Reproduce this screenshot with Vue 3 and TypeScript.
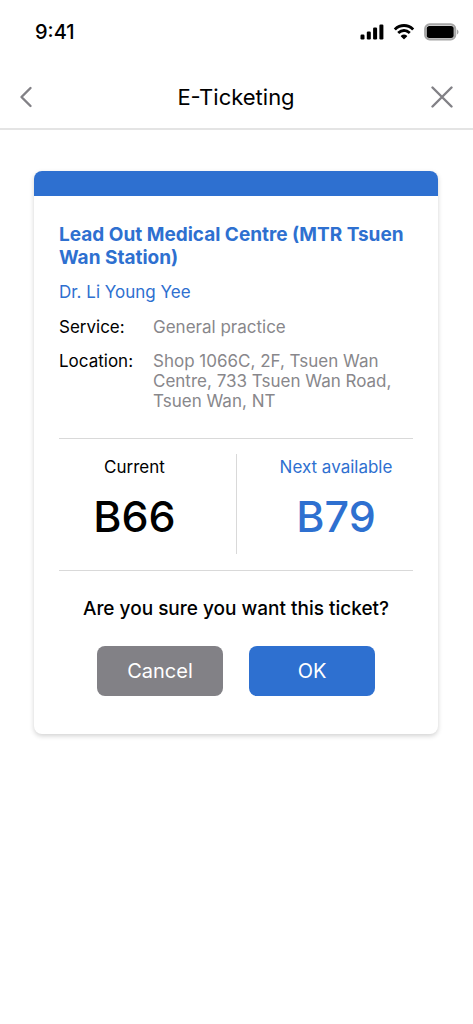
<script setup lang="ts">
interface Detail {
  label: string
  value: string
}

interface Ticket {
  caption: string
  number: string
  highlighted: boolean
}

const clinic = 'Lead Out Medical Centre (MTR Tsuen Wan Station)'
const doctor = 'Dr. Li Young Yee'

const details: Detail[] = [
  { label: 'Service:', value: 'General practice' },
  { label: 'Location:', value: 'Shop 1066C, 2F, Tsuen Wan Centre, 733 Tsuen Wan Road, Tsuen Wan, NT' },
]

const tickets: Ticket[] = [
  { caption: 'Current', number: 'B66', highlighted: false },
  { caption: 'Next available', number: 'B79', highlighted: true },
]
</script>

<template>
  <div class="screen">
    <div class="status">
      <span class="time">9:41</span>
      <div class="indicators">
        <svg width="24" height="18" viewBox="0 0 24 18" aria-hidden="true">
          <rect x="0.5" y="11.5" width="4" height="5" rx="1.2" />
          <rect x="6.8" y="8.5" width="4" height="8" rx="1.2" />
          <rect x="13.1" y="4.5" width="4" height="12" rx="1.2" />
          <rect x="19.4" y="1.5" width="4" height="15" rx="1.2" />
        </svg>
        <svg width="22" height="18" viewBox="0 0 22 18" aria-hidden="true">
          <path d="M11 4.1c3 0 5.8 1.15 7.9 3.15.16.15.4.15.56 0l1.5-1.52a.42.42 0 0 0 0-.6C15.4-.27 6.6-.27 1.04 5.13a.42.42 0 0 0 0 .6l1.5 1.52c.16.15.4.15.56 0C5.2 5.25 8 4.1 11 4.1Z" />
          <path d="M11 9.1c1.64 0 3.22.6 4.43 1.7.16.15.42.15.58 0l1.5-1.53a.42.42 0 0 0 0-.6 9.5 9.5 0 0 0-13.02 0 .42.42 0 0 0 0 .6l1.5 1.53c.16.15.42.15.58 0A6.58 6.58 0 0 1 11 9.1Z" />
          <path d="M14.05 12.8a.42.42 0 0 1-.01.6l-2.6 2.65a.6.6 0 0 1-.88 0l-2.6-2.65a.42.42 0 0 1-.01-.6 4.68 4.68 0 0 1 6.1 0Z" />
        </svg>
        <svg width="35" height="18" viewBox="0 0 35 18" aria-hidden="true">
          <rect x="1.2" y="1.4" width="30" height="15" rx="4.5" fill="none" stroke="#a6a6a6" stroke-width="2.2" />
          <rect x="2.7" y="2.9" width="27" height="12" rx="2.6" />
          <path d="M33 6.4v5c.9-.45 1.5-1.4 1.5-2.5s-.6-2.05-1.5-2.5Z" fill="#a6a6a6" />
        </svg>
      </div>
    </div>

    <header class="bar">
      <button class="icon" type="button" aria-label="Back">
        <svg width="14" height="22" viewBox="0 0 14 22">
          <path d="M11.5 2 2.5 11l9 9" />
        </svg>
      </button>
      <h1>E-Ticketing</h1>
      <button class="icon end" type="button" aria-label="Close">
        <svg width="22" height="22" viewBox="0 0 22 22">
          <path d="M1.5 1.5l19 19M20.5 1.5l-19 19" />
        </svg>
      </button>
    </header>

    <main>
      <section class="card">
        <div class="content">
          <h2>{{ clinic }}</h2>
          <p class="doctor">{{ doctor }}</p>
          <dl>
            <div v-for="item in details" :key="item.label" class="detail">
              <dt>{{ item.label }}</dt>
              <dd>{{ item.value }}</dd>
            </div>
          </dl>
          <div class="tickets">
            <div
              v-for="ticket in tickets"
              :key="ticket.number"
              class="ticket"
              :class="{ next: ticket.highlighted }"
            >
              <span class="caption">{{ ticket.caption }}</span>
              <span class="number">{{ ticket.number }}</span>
            </div>
          </div>
          <p class="question">Are you sure you want this ticket?</p>
          <div class="actions">
            <button class="cancel" type="button">Cancel</button>
            <button class="ok" type="button">OK</button>
          </div>
        </div>
      </section>
    </main>
  </div>
</template>

<style>
body {
  margin: 0;
  background: #fff;
}
</style>

<style scoped>
.screen {
  min-height: 100vh;
  background: #fff;
  color: #000;
  font-family: Inter, "Liberation Sans", sans-serif;
  font-size: 17px;
  line-height: 20px;
}

h1,
h2,
p,
dl,
dd {
  margin: 0;
}

button {
  padding: 0;
  border: 0;
  font: inherit;
  cursor: pointer;
}

.status {
  display: flex;
  align-items: center;
  justify-content: space-between;
  height: 64px;
  padding: 0 14px 1px 35px;
}

.time {
  font-size: 20px;
  font-weight: 500;
}

.indicators {
  display: flex;
  align-items: center;
  gap: 9px;
}

.bar {
  display: grid;
  grid-template-columns: 40px 1fr 40px;
  align-items: center;
  height: 63px;
  padding: 0 20px 0 19px;
  border-bottom: 2px solid #e4e4e4;
}

.bar h1 {
  font-size: 22px;
  font-weight: 400;
  line-height: 28px;
  text-align: center;
}

.icon {
  display: flex;
  align-items: center;
  height: 40px;
  background: none;
}

.icon.end {
  justify-content: flex-end;
}

.icon path {
  fill: none;
  stroke: #828186;
  stroke-width: 2.4;
  stroke-linecap: round;
  stroke-linejoin: round;
}

main {
  padding: 41px 35px 40px 34px;
}

.card {
  border-top: 25px solid #2e70d0;
  border-radius: 8px;
  box-shadow: 0 2px 5px rgba(0, 0, 0, 0.18);
}

.content {
  padding: 27px 25px 38px;
}

h2 {
  color: #2e70d0;
  font-size: 19px;
  font-weight: 700;
  line-height: 23px;
}

.doctor {
  margin-top: 13px;
  color: #2e70d0;
}

dl {
  display: grid;
  gap: 14px;
  margin-top: 15px;
}

.detail {
  display: grid;
  grid-template-columns: 94px 1fr;
}

dd {
  color: #88878b;
}

.tickets {
  display: grid;
  grid-template-columns: 1fr 1fr;
  margin-top: 27px;
  padding: 15px 0 16px;
  border: solid #d9d9d9;
  border-width: 1px 0;
}

.ticket {
  display: flex;
  flex-direction: column;
  align-items: center;
  gap: 15px;
  height: 100px;
  box-sizing: border-box;
  padding-top: 3px;
}

.next {
  border-left: 1px solid #d9d9d9;
  padding-left: 22px;
  color: #2e70d0;
}

.ticket:not(.next) {
  padding-right: 26px;
}

.number {
  font-size: 43px;
  font-weight: 500;
  line-height: 48px;
}

.question {
  margin-top: 26px;
  font-size: 19px;
  font-weight: 500;
  line-height: 24px;
  text-align: center;
}

.actions {
  display: flex;
  justify-content: center;
  gap: 26px;
  margin-top: 25px;
}

.actions button {
  width: 126px;
  height: 50px;
  border-radius: 8px;
  color: #fff;
  font-size: 20px;
}

.cancel {
  background: #828186;
}

.ok {
  background: #2e70d0;
}
</style>
